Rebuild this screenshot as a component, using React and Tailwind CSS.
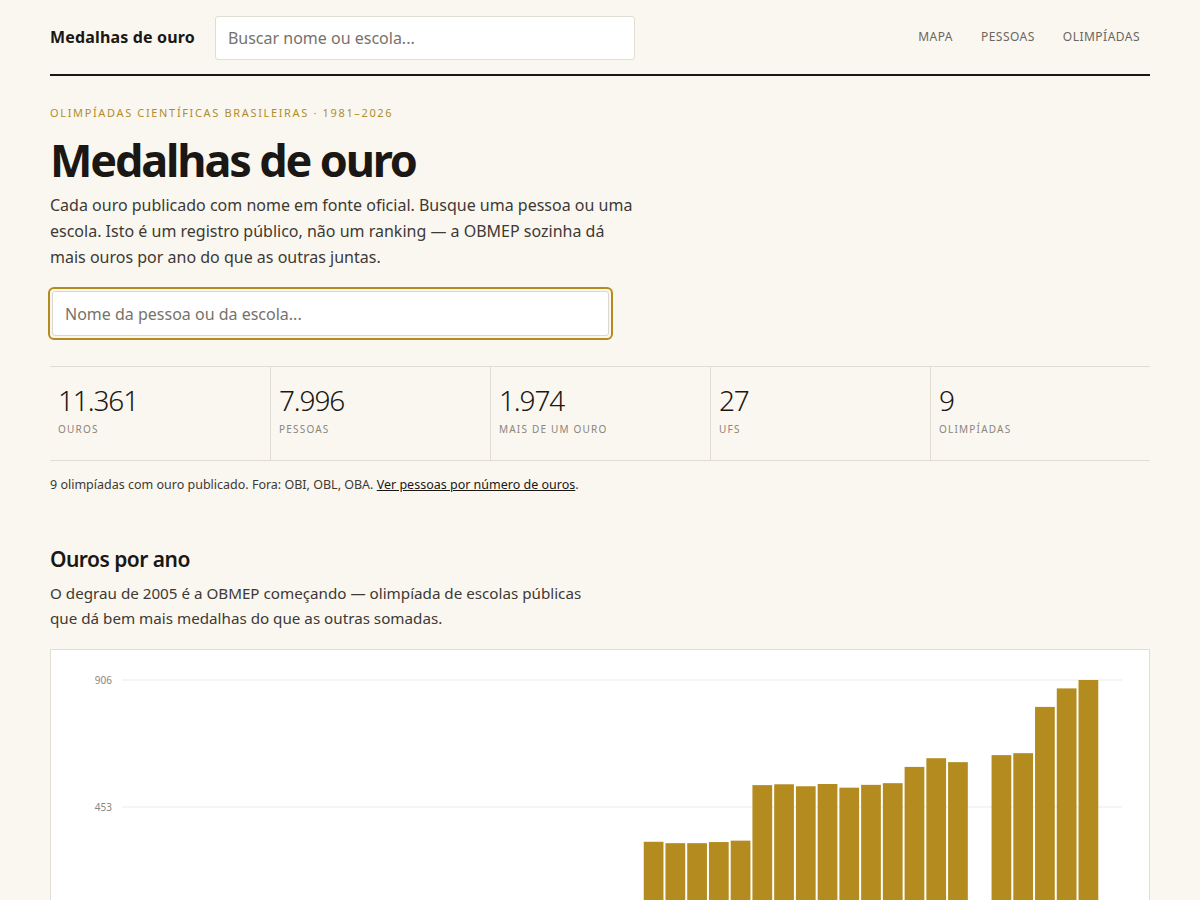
import React from 'react';

const GOLD = '#b38b1f';

// golds per year, 1981–2026 (null = no competition that year)
const YEARS = [
  14, 16, 15, 18, 17, 19, 18, 20, 21, 22, 20, 23, 24, 22, 25, 26, 24, 27, 28, 27,
  29, 30, 31, 32, 329, 324, 324, 328, 333, 531, 534, 527, 535, 522, 532, 538,
  596, 627, 613, null, 638, 645, 810, 876, 906, null,
];

const stats = [
  { value: '11.361', label: 'Ouros' },
  { value: '7.996', label: 'Pessoas' },
  { value: '1.974', label: 'Mais de um ouro' },
  { value: '27', label: 'UFs' },
  { value: '9', label: 'Olimpíadas' },
];

const YearChart = () => {
  const left = 71;
  const right = 1071;
  const top = 30;
  const base = 284;
  const max = 906;
  const step = (right - left) / YEARS.length;
  const y = (v) => base - (v / max) * (base - top);

  return (
    <svg width="1098" height="330" className="block">
      {[max, max / 2].map((v) => (
        <g key={v}>
          <line x1={left} x2={right} y1={y(v)} y2={y(v)} stroke="#efebe2" strokeWidth="1" />
          <text
            x={left - 10}
            y={y(v) + 4}
            textAnchor="end"
            fontSize="10"
            fill="#8a857d"
            fontFamily="'Noto Sans', sans-serif"
          >
            {Math.round(v)}
          </text>
        </g>
      ))}
      <line x1={left} x2={right} y1={base} y2={base} stroke="#efebe2" strokeWidth="1" />
      {YEARS.map((v, i) =>
        v == null ? null : (
          <rect
            key={i}
            x={left + i * step}
            y={y(v)}
            width={step - 2}
            height={base - y(v)}
            fill={GOLD}
          />
        )
      )}
    </svg>
  );
};

export default function App() {
  return (
    <div className="min-h-screen bg-[#faf7f0] text-[#1a1714] font-['Noto_Sans',sans-serif]">
      <div className="max-w-[1100px] mx-auto">
        {/* top bar */}
        <header className="flex items-center h-[76px] border-b-2 border-[#1a1714]">
          <div className="text-base font-bold tracking-[0.01em] mr-5">Medalhas de ouro</div>
          <input
            className="mt-[1px] w-[420px] h-11 px-3 bg-white border border-[#e2ddd2] rounded-[3px] text-base placeholder-[#77726b] outline-none"
            placeholder="Buscar nome ou escola..."
          />
          <nav className="ml-auto flex gap-7 pr-2.5 text-xs uppercase tracking-[0.04em] text-[#6b665f]">
            <a>Mapa</a>
            <a>Pessoas</a>
            <a>Olimpíadas</a>
          </nav>
        </header>

        {/* intro */}
        <section className="pt-[29px]">
          <p className="text-[11px] uppercase tracking-[0.15em] text-[#b08d2a] leading-4">
            Olimpíadas científicas brasileiras · 1981–2026
          </p>
          <h1 className="mt-[12px] text-[45px] leading-[54px] font-bold tracking-[-0.048em]">Medalhas de ouro</h1>
          <p className="mt-[5px] max-w-[588px] text-base leading-[26px] text-[#3d3935]">
            Cada ouro publicado com nome em fonte oficial. Busque uma pessoa ou uma escola. Isto é um
            registro público, não um ranking — a OBMEP sozinha dá mais ouros por ano do que as outras
            juntas.
          </p>
          <div className="mt-[17px] w-[565px] p-[2px] -ml-[2px] rounded-[6px] border-2 border-[#b38b1f]">
            <input
              className="w-full h-[45px] px-3 bg-white border border-[#dcd7cb] rounded-[3px] text-base placeholder-[#77726b] outline-none"
              placeholder="Nome da pessoa ou da escola..."
            />
          </div>
        </section>

        {/* totals */}
        <div className="mt-[26px] grid grid-cols-5 border-y border-[#e2ddd2]">
          {stats.map((s, i) => (
            <div key={s.label} className={`h-[93px] px-2 pt-[15px] ${i > 0 ? 'border-l border-[#e2ddd2]' : ''}`}>
              <div className="text-[28px] leading-[36px] font-light tracking-[-0.04em] text-[#1a1714]">{s.value}</div>
              <div className="mt-[4px] text-[10px] uppercase tracking-[0.12em] text-[#8a857d]">{s.label}</div>
            </div>
          ))}
        </div>
        <p className="mt-[14px] text-[12.5px] leading-5 text-[#3d3935]">
          9 olimpíadas com ouro publicado. Fora: OBI, OBL, OBA.{' '}
          <a className="underline text-[#1a1714]">Ver pessoas por número de ouros</a>.
        </p>

        {/* by year */}
        <section className="mt-[50px]">
          <h2 className="text-[21px] leading-7 font-semibold tracking-tight">Ouros por ano</h2>
          <p className="mt-[8px] max-w-[545px] text-[15.2px] leading-[25px] text-[#3d3935]">
            O degrau de 2005 é a OBMEP começando — olimpíada de escolas públicas que dá bem mais
            medalhas do que as outras somadas.
          </p>
          <div className="mt-[18px] bg-white border border-[#e2ddd2]">
            <YearChart />
          </div>
        </section>
      </div>
    </div>
  );
}
